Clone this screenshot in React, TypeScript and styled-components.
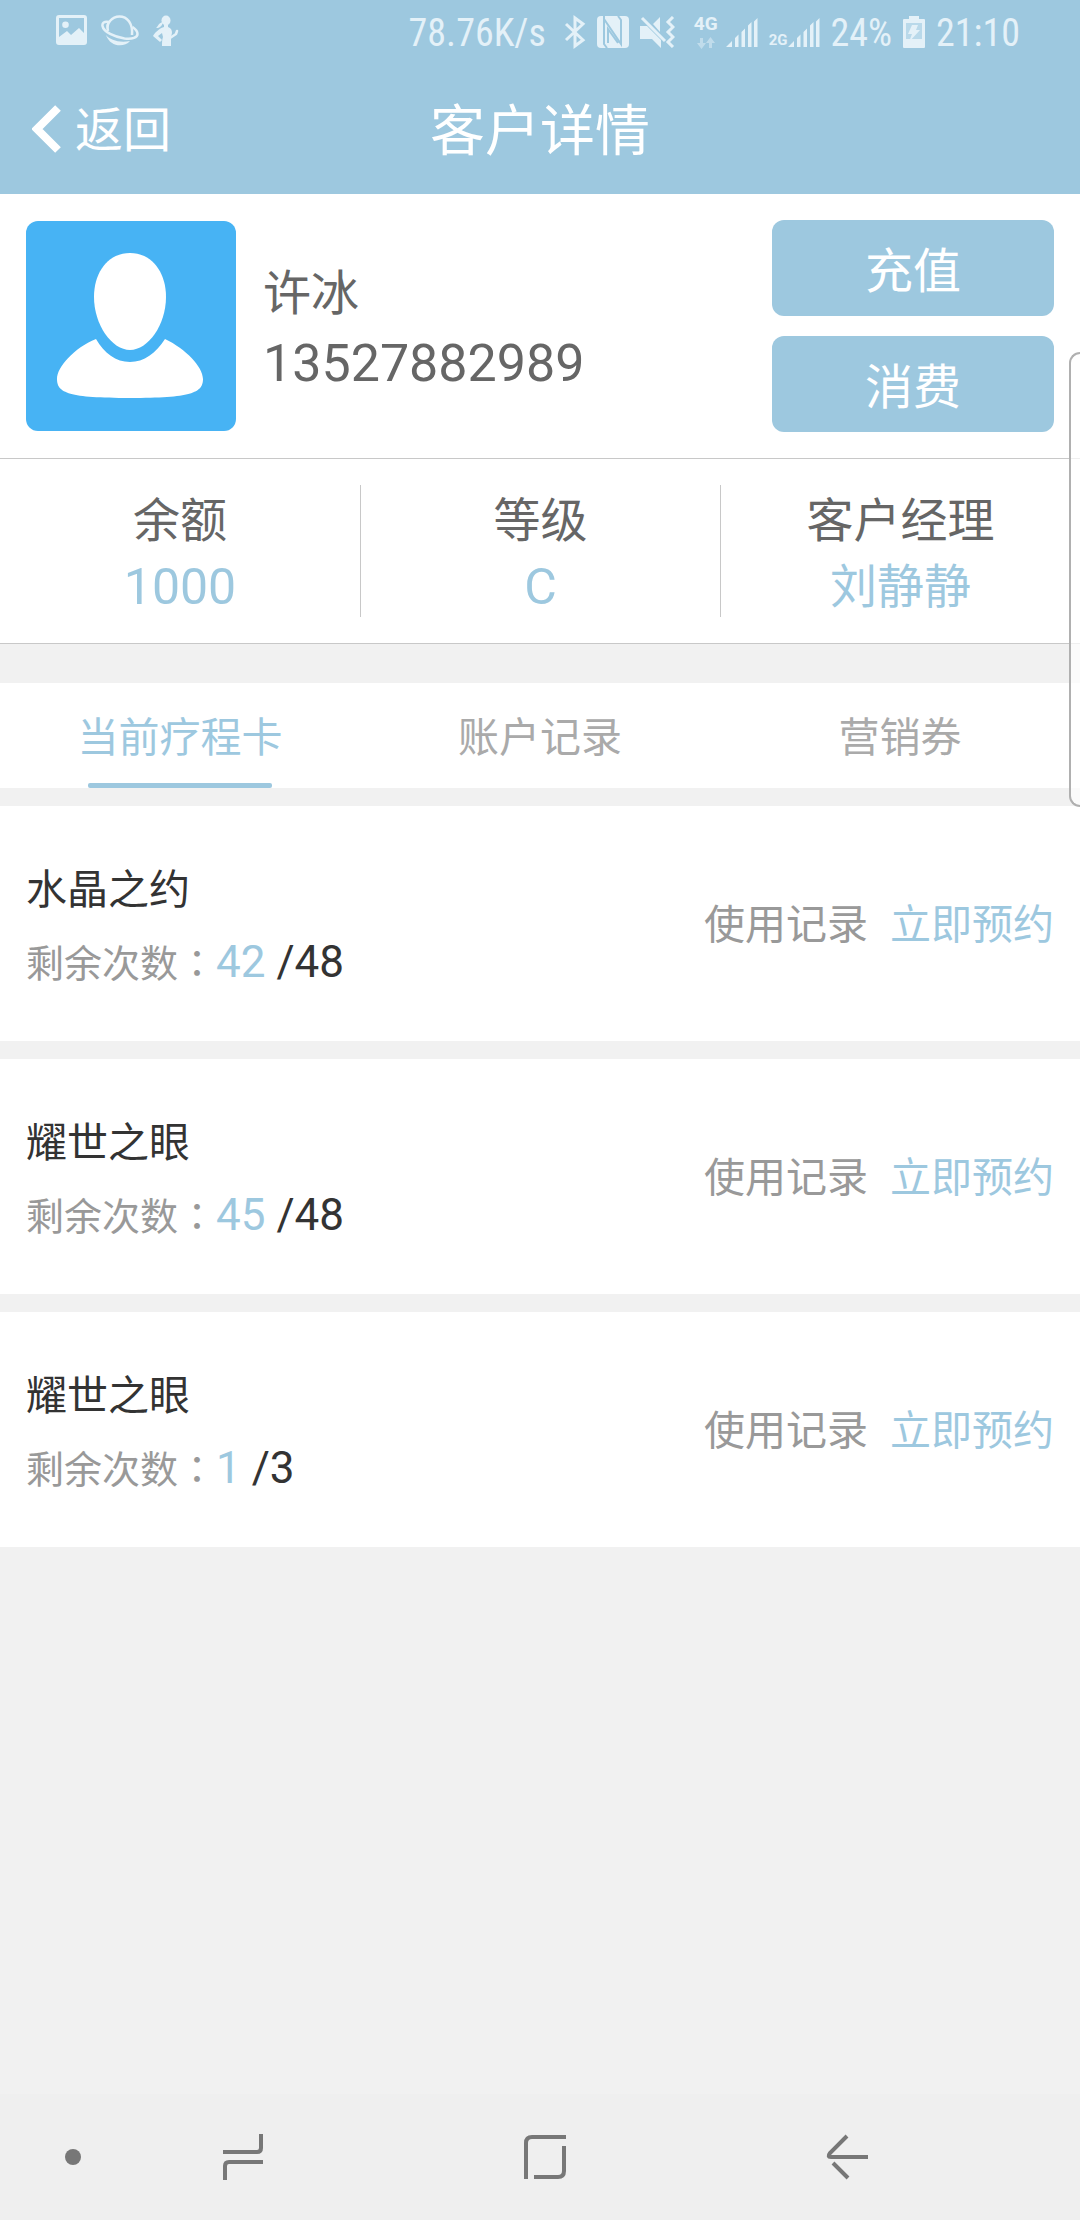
import React, { useState } from 'react';
import styled, { createGlobalStyle } from 'styled-components';

const sky = '#9dc8df';

const Global = createGlobalStyle`
  * { box-sizing: border-box; }
  html, body { margin: 0; background: #f1f1f1; }
  body {
    font-family: Roboto, "Noto Sans CJK SC", sans-serif;
    overflow-x: hidden;
  }
  h1, h2, p, dl, dt, dd, ul { margin: 0; padding: 0; font-weight: 400; }
  button { font: inherit; color: inherit; border: 0; background: none; padding: 0; cursor: pointer; }
`;

const Screen = styled.div`
  position: relative;
  display: flex;
  flex-direction: column;
  min-height: 100vh;
`;

const TopArea = styled.header`
  background: ${sky};
  color: #fff;
`;

const StatusBar = styled.div`
  display: flex;
  align-items: center;
  justify-content: space-between;
  height: 64px;
  padding: 0 60px 0 56px;
  color: #e4f1f8;
`;

const Notifications = styled.div`
  display: flex;
  align-items: center;
  gap: 14px;
  padding-bottom: 4px;
`;

const Indicators = styled.div`
  display: flex;
  align-items: center;
  gap: 11px;
`;

const StatusText = styled.span`
  padding-top: 2px;
  font-family: "Roboto Condensed", Roboto, sans-serif;
  font-size: 38px;
  line-height: 40px;
`;

const FirstSim = styled.div`
  display: flex;
  align-items: center;
  gap: 8px;
  padding-left: 8px;
`;

const Network = styled.div`
  display: flex;
  flex-direction: column;
  align-items: center;
  gap: 4px;
  font-size: 19px;
  line-height: 18px;
  font-weight: 700;
`;

const SecondSim = styled.div`
  display: flex;
  align-items: flex-end;
  font-size: 15px;
  line-height: 14px;
  font-weight: 700;
`;

const TitleBar = styled.div`
  display: grid;
  grid-template-columns: 1fr auto 1fr;
  align-items: center;
  height: 130px;
  padding: 0 32px;
`;

const BackButton = styled.button`
  display: flex;
  align-items: center;
  gap: 11px;
  justify-self: start;
  font-size: 48px;
  line-height: 64px;
`;

const BackLabel = styled.span`
  padding-top: 4px;
`;

const Title = styled.h1`
  padding-top: 4px;
  font-size: 55px;
  line-height: 72px;
`;

const Profile = styled.section`
  display: flex;
  align-items: center;
  gap: 27px;
  padding: 26px;
  background: #fff;
  border-bottom: 1px solid #c8c8c8;
`;

const Avatar = styled.svg`
  width: 210px;
  height: 210px;
  border-radius: 12px;
  background: #47b3f4;
`;

const Person = styled.div`
  flex: 1;
  padding-top: 6px;
  color: #666;
`;

const PersonName = styled.h2`
  font-size: 48px;
  line-height: 70px;
`;

const Phone = styled.p`
  font-size: 52px;
  line-height: 70px;
`;

const Actions = styled.div`
  display: flex;
  flex-direction: column;
  gap: 20px;
  width: 282px;
`;

const ActionButton = styled.button`
  height: 96px;
  padding-bottom: 2px;
  border-radius: 12px;
  background: ${sky};
  color: #fff;
  font-size: 48px;
`;

const Stats = styled.dl`
  display: grid;
  grid-template-columns: repeat(3, 1fr);
  padding: 26px 0;
  background: #fff;
  border-bottom: 1px solid #c8c8c8;
`;

const Stat = styled.div`
  height: 132px;
  padding-top: 3px;
  text-align: center;
  font-size: 47px;
  line-height: 66px;
  & + & { border-left: 1px solid #c8c8c8; }
`;

const StatLabel = styled.dt`
  color: #666;
`;

const StatValue = styled.dd<{ $latin?: boolean }>`
  color: ${sky};
  font-size: ${(p) => (p.$latin ? 50 : 47)}px;
`;

const Tabs = styled.nav`
  display: grid;
  grid-template-columns: repeat(3, 1fr);
  margin-top: 39px;
  background: #fff;
`;

const Tab = styled.button<{ $active: boolean }>`
  display: flex;
  flex-direction: column;
  align-items: center;
  height: 105px;
  padding-top: 25px;
  justify-content: space-between;
  font-size: 41px;
  line-height: 60px;
  color: ${(p) => (p.$active ? sky : '#aaa')};
  &::after {
    content: '';
    width: 184px;
    height: 5px;
    border-radius: 2px;
    background: ${(p) => (p.$active ? sky : 'transparent')};
  }
`;

const CardList = styled.ul`
  display: flex;
  flex-direction: column;
  gap: 18px;
  margin-top: 18px;
  list-style: none;
`;

const Card = styled.li`
  display: flex;
  align-items: center;
  justify-content: space-between;
  height: 235px;
  padding: 0 26px;
  background: #fff;
`;

const CardInfo = styled.div`
  padding-top: 8px;
`;

const CardName = styled.h2`
  color: #333;
  font-size: 41px;
  line-height: 70px;
`;

const Remaining = styled.p`
  font-size: 44px;
  line-height: 72px;
  color: #333;
`;

const RemainingLabel = styled.span`
  color: #999;
  font-size: 38px;
`;

const Colon = styled.span`
  font-family: "Noto Sans CJK TC", sans-serif;
`;

const Left = styled.span`
  color: ${sky};
`;

const CardLinks = styled.div`
  display: flex;
  gap: 22px;
  padding-top: 2px;
  font-size: 41px;
  line-height: 60px;
`;

const CardLink = styled.a<{ $strong?: boolean }>`
  color: ${(p) => (p.$strong ? sky : '#999')};
  text-decoration: none;
`;

const EdgePanel = styled.div`
  position: absolute;
  top: 352px;
  right: 0;
  width: 11px;
  height: 455px;
  border: 2px solid #b0b0b0;
  border-right: 0;
  border-radius: 14px 0 0 14px;
  background: rgba(255, 255, 255, 0.7);
`;

const SystemNav = styled.nav`
  display: grid;
  grid-template-columns: 92px repeat(3, 1fr);
  align-items: center;
  justify-items: center;
  height: 126px;
  margin-top: auto;
  padding-right: 82px;
  background: #efefef;
`;

const NavButton = styled.button<{ $end?: boolean }>`
  display: flex;
  justify-self: ${(p) => (p.$end ? 'end' : 'center')};
  padding: ${(p) => (p.$end ? '10px' : '0')};
`;

const Signal = () => (
  <svg width="32" height="29" viewBox="0 0 32 29" fill="currentColor" aria-hidden="true">
    <path d="M0 29l6-6v6zM9 20l3.500-3.500V29H9zM15.500 14l3.500-3.500V29h-3.500zM22 7.500l3.500-3.500V29H22zM28 3.500L31.500 0v29H28z" />
  </svg>
);

const stats = [
  { label: '余额', value: '1000', latin: true },
  { label: '等级', value: 'C', latin: true },
  { label: '客户经理', value: '刘静静', latin: false },
];

const tabs = ['当前疗程卡', '账户记录', '营销券'];

const cards = [
  { name: '水晶之约', left: 42, total: 48 },
  { name: '耀世之眼', left: 45, total: 48 },
  { name: '耀世之眼', left: 1, total: 3 },
];

export default function App() {
  const [active, setActive] = useState(0);
  return (
    <Screen lang="zh-CN">
      <Global />
      <TopArea>
        <StatusBar>
          <Notifications>
            <svg width="31" height="30" viewBox="0 0 31 30" aria-hidden="true">
              <path fill="currentColor" fillRule="evenodd" d="M3 0h25a3 3 0 0 1 3 3v24a3 3 0 0 1-3 3H3a3 3 0 0 1-3-3V3a3 3 0 0 1 3-3zM3 3v19l8-6 4 4 8-7 5 5V3zM9.500 6.500a3.300 3.300 0 1 1 0 6.600 3.300 3.300 0 0 1 0-6.600z" />
            </svg>
            <svg width="38" height="31" viewBox="0 0 38 31" fill="none" stroke="currentColor" aria-hidden="true">
              <path strokeWidth="2.500" d="M7 16C5 8 11 1.500 18.500 1.500S32 8 31 20" />
              <path strokeWidth="2.500" d="M8 7C3 6 1 8 1.500 11c1 6 12 11 22 12.500 8 1 13-1 13-4.500 0-2.500-2-5-5-7" />
              <path strokeWidth="1.500" d="M7 8c-2 3-1 5 0 7" />
              <path fill="currentColor" stroke="none" d="M5 20c4 5 13 8 24 6-6 7-20 6-24-6z" />
            </svg>
            <svg width="26" height="31" viewBox="0 0 26 31" fill="currentColor" aria-hidden="true">
              <ellipse cx="13" cy="5.500" rx="4.500" ry="5" />
              <path d="M10 7c-1 4-3 6-7 6 2-1 2-5 7-6z" />
              <path d="M11 10h4v2c3 1 4 3 4 6l-1 4v9H9c0-4 0-6 1-9l-1-4-4 3 4 4-2 2-7-6c2-3 5-7 11-9z" />
              <path fill="none" stroke="currentColor" strokeWidth="2.500" strokeLinejoin="round" strokeLinecap="round" d="M17 23l6-4 1-3" />
            </svg>
          </Notifications>
          <Indicators>
            <StatusText>78.76K/s</StatusText>
            <svg width="29" height="34" viewBox="0 0 29 34" fill="none" stroke="currentColor" strokeWidth="3" aria-hidden="true">
              <path d="M9 9l17 16-8 6V3l8 6L9 25" />
            </svg>
            <svg width="32" height="32" viewBox="0 0 32 32" aria-hidden="true">
              <rect width="32" height="32" rx="4" fill="currentColor" />
              <path fill="none" stroke={sky} strokeWidth="2" d="M7 0v28l3 4M7 3l17 25V4l-3-4M11 27V13l10 14" />
            </svg>
            <svg width="35" height="32" viewBox="0 0 35 32" aria-hidden="true">
              <path fill="currentColor" d="M0 10h7l14 14v8l-9-9H0zM20 1v15l-7-8z" />
              <path fill="none" stroke="currentColor" strokeWidth="3" d="M2 2l23 23M33 1l-5 5 5 5-5 5 5 5-5 5 5 5" />
            </svg>
            <FirstSim>
              <Network>
                4G
                <svg width="18" height="12" viewBox="0 0 18 12" fill="currentColor" opacity="0.5" aria-hidden="true">
                  <path d="M3 1h3v5h3l-4.500 6L0 6h3zM12 11h3V6h3l-4.500-6L9 6h3z" />
                </svg>
              </Network>
              <Signal />
            </FirstSim>
            <SecondSim>
              2G
              <Signal />
            </SecondSim>
            <StatusText>24%</StatusText>
            <svg width="22" height="32" viewBox="0 0 22 32" aria-hidden="true">
              <path fill="currentColor" d="M6 0h10v3h5a1 1 0 0 1 1 1v27a1 1 0 0 1-1 1H1a1 1 0 0 1-1-1V4a1 1 0 0 1 1-1h5z" />
              <path fill="#b9d9ea" d="M3 7h16v16H3z" />
              <path fill="currentColor" d="M9 9h6l-2 5h4L6 26l3-8H5z" />
            </svg>
            <StatusText>21:10</StatusText>
          </Indicators>
        </StatusBar>
        <TitleBar>
          <BackButton type="button">
            <svg width="32" height="48" viewBox="0 0 32 48" aria-hidden="true">
              <path fill="none" stroke="#fff" strokeWidth="8" d="M26 3L5 24l21 21" />
            </svg>
            <BackLabel>返回</BackLabel>
          </BackButton>
          <Title>客户详情</Title>
        </TitleBar>
      </TopArea>

      <Profile>
        <Avatar viewBox="0 0 210 210" aria-hidden="true">
          <path fill="#fff" d="M104 32c21 0 36 18 36 44 0 28-18 53-36 53S68 104 68 76c0-26 15-44 36-44z" />
          <path fill="#fff" d="M70 118c8 14 20 23 34 23s26-9 35-23c21 10 38 28 38 40 0 14-12 19-73 19s-73-5-73-19c0-12 17-31 39-40z" />
        </Avatar>
        <Person>
          <PersonName>许冰</PersonName>
          <Phone>13527882989</Phone>
        </Person>
        <Actions>
          <ActionButton type="button">充值</ActionButton>
          <ActionButton type="button">消费</ActionButton>
        </Actions>
      </Profile>

      <Stats>
        {stats.map((s) => (
          <Stat key={s.label}>
            <StatLabel>{s.label}</StatLabel>
            <StatValue $latin={s.latin}>{s.value}</StatValue>
          </Stat>
        ))}
      </Stats>

      <Tabs>
        {tabs.map((t, i) => (
          <Tab key={t} type="button" $active={i === active} onClick={() => setActive(i)}>
            {t}
          </Tab>
        ))}
      </Tabs>

      <CardList>
        {cards.map((c, i) => (
          <Card key={i}>
            <CardInfo>
              <CardName>{c.name}</CardName>
              <Remaining>
                <RemainingLabel>剩余次数<Colon lang="zh-TW">：</Colon></RemainingLabel>
                <Left>{c.left}</Left> /{c.total}
              </Remaining>
            </CardInfo>
            <CardLinks>
              <CardLink href="#records">使用记录</CardLink>
              <CardLink href="#booking" $strong>立即预约</CardLink>
            </CardLinks>
          </Card>
        ))}
      </CardList>

      <EdgePanel />

      <SystemNav>
        <NavButton type="button" aria-label="隐藏导航栏" $end>
          <svg width="18" height="18" viewBox="0 0 18 18"><circle cx="9" cy="9" r="8" fill="#777" /></svg>
        </NavButton>
        <NavButton type="button" aria-label="最近任务">
          <svg width="42" height="48" viewBox="0 0 42 48" fill="none" stroke="#777" strokeWidth="4">
            <path d="M1 19h34q4 0 4-4V1M41 29H7q-4 0-4 4v14" />
          </svg>
        </NavButton>
        <NavButton type="button" aria-label="主屏幕">
          <svg width="42" height="44" viewBox="0 0 42 44" fill="none" stroke="#777" strokeWidth="4">
            <path d="M2 44V8q0-6 6-6h34M40 11v25q0 6-6 6H10" />
          </svg>
        </NavButton>
        <NavButton type="button" aria-label="返回">
          <svg width="42" height="46" viewBox="0 0 42 46" fill="none" stroke="#777" strokeWidth="4">
            <path d="M21 2L4 19q-3 4 1 4h37M7 29l15 15" />
          </svg>
        </NavButton>
      </SystemNav>
    </Screen>
  );
}
